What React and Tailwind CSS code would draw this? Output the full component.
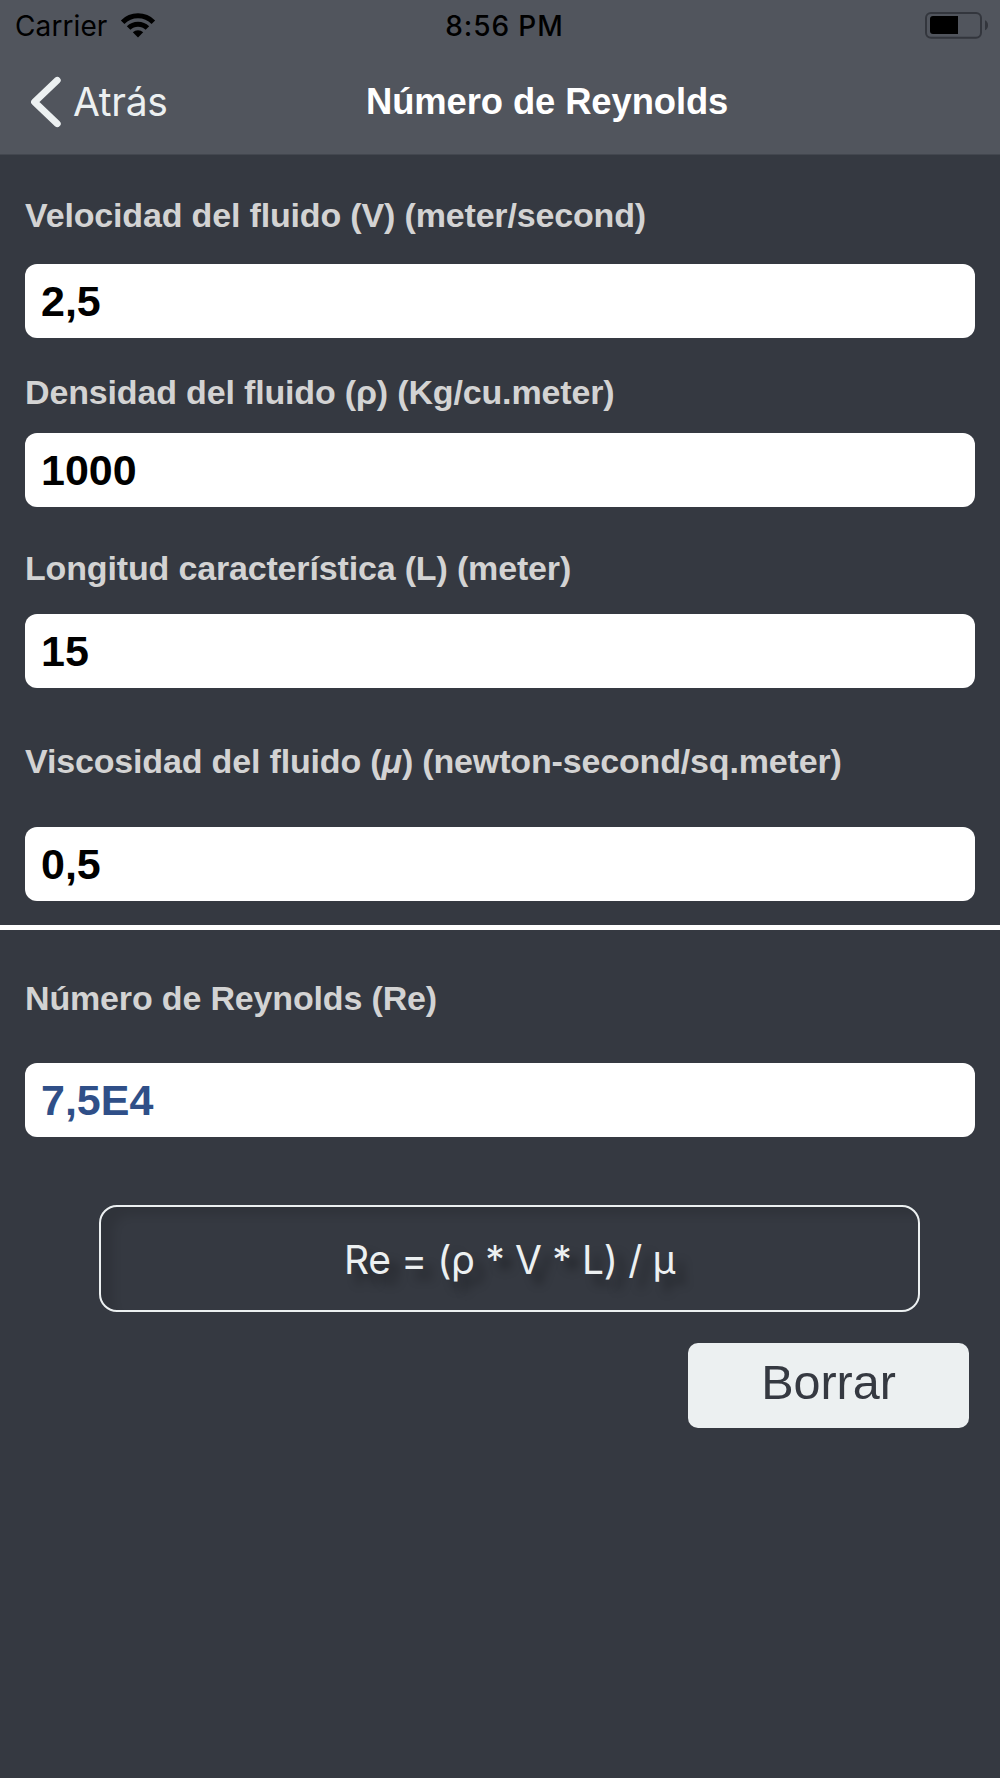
import React, { useState } from "react";

const inputFields = [
  {
    id: "velocity",
    label: "Velocidad del fluido (V) (meter/second)",
    value: "2,5",
    spacing: "pt-[40px] gap-[29px]",
  },
  {
    id: "density",
    label: "Densidad del fluido (ρ) (Kg/cu.meter)",
    value: "1000",
    spacing: "pt-[34px] gap-[21px]",
  },
  {
    id: "length",
    label: "Longitud característica (L) (meter)",
    value: "15",
    spacing: "pt-[41px] gap-[26px]",
  },
  {
    id: "viscosity",
    label: (
      <>
        Viscosidad del fluido (<i>μ</i>) (newton-second/sq.meter)
      </>
    ),
    value: "0,5",
    spacing: "pt-[53px] gap-[46px]",
  },
];

const WifiIcon = () => (
  <svg width="36" height="26" viewBox="0 0 36 26" fill="none">
    <path d="M2.66 9.16 A21.7 21.7 0 0 1 33.34 9.16" stroke="#000" strokeWidth="5" />
    <path d="M8.6 15.1 A13.3 13.3 0 0 1 27.4 15.1" stroke="#000" strokeWidth="5" />
    <path d="M18 24.5 L12.8 19.3 A7.4 7.4 0 0 1 23.2 19.3 Z" fill="#000" />
  </svg>
);

const BatteryIcon = () => (
  <svg width="64" height="28" viewBox="0 0 64 28" fill="none">
    <rect x="1" y="1" width="55" height="24.8" rx="5" stroke="#33363d" strokeWidth="2" />
    <path d="M8 4 H33 V22 H8 Q5 22 5 19 V7 Q5 4 8 4 Z" fill="#000" />
    <path d="M60 8.2 Q63 9.6 63 13.2 Q63 16.8 60 18.2 Z" fill="#33363d" />
  </svg>
);

const Field = ({ id, label, value, spacing, color = "text-black", onChange }) => (
  <div className={`flex flex-col px-[25px] ${spacing}`}>
    <label
      htmlFor={id}
      className="h-10 whitespace-nowrap text-[34px] leading-10 font-bold tracking-[-0.16px] text-[#d3d3d3]"
    >
      {label}
    </label>
    <input
      id={id}
      value={value}
      readOnly={!onChange}
      onChange={onChange}
      className={`h-[74px] w-full rounded-xl bg-white px-4 text-[43px] font-bold outline-none ${color}`}
    />
  </div>
);

const App = () => {
  const [values, setValues] = useState(
    Object.fromEntries(inputFields.map((field) => [field.id, field.value]))
  );
  const [result, setResult] = useState("7,5E4");

  const handleClear = () => {
    setValues({ velocity: "", density: "", length: "", viscosity: "" });
    setResult("");
  };

  return (
    <div className="h-[1778px] w-[1000px] overflow-hidden bg-[#353941] font-['Liberation_Sans',Arial,sans-serif]">
      {/* Status bar and navigation */}
      <header className="h-[155px] border-b border-[#43474f] bg-[#51555d]">
        <div className="grid h-[50px] grid-cols-3 items-center font-['Inter',sans-serif] text-[28px] leading-[50px] text-black">
          <div className="flex items-center gap-[13px] pl-[15px]">
            <span className="tracking-[0.1px]">Carrier</span>
            <WifiIcon />
          </div>
          <span className="pt-px pl-[9px] text-center font-medium tracking-[0.9px]">
            8:56 PM
          </span>
          <div className="flex justify-end pr-[11px]">
            <BatteryIcon />
          </div>
        </div>
        <div className="grid h-[104px] grid-cols-[360px_1fr] items-center">
          <button className="flex items-center gap-3 pl-[30px] font-['Inter',sans-serif] text-[39px] leading-[50px] font-normal tracking-[-0.3px] text-[#ecf0f1]">
            <svg width="31" height="52" viewBox="0 0 31 52" fill="none">
              <path
                d="M27.3 4.3 L4.5 26 L27.3 47.7"
                stroke="#ecf0f1"
                strokeWidth="6.8"
                strokeLinecap="round"
                strokeLinejoin="round"
              />
            </svg>
            Atrás
          </button>
          <h1 className="pl-[6px] text-[36.4px] leading-[50px] font-bold tracking-[-0.1px] text-white">
            Número de Reynolds
          </h1>
        </div>
      </header>

      <main>
        {inputFields.map((field) => (
          <Field
            key={field.id}
            id={field.id}
            label={field.label}
            spacing={field.spacing}
            value={values[field.id]}
            onChange={(e) =>
              setValues((prev) => ({ ...prev, [field.id]: e.target.value }))
            }
          />
        ))}

        <hr className="mt-6 h-[5px] border-0 bg-white" />

        <Field
          id="reynolds"
          label="Número de Reynolds (Re)"
          value={result}
          spacing="pt-12 gap-[45px]"
          color="text-[#2f4f88]"
        />

        {/* Formula */}
        <div className="mt-[68px] ml-[99px] flex h-[107px] w-[821px] items-center justify-center rounded-[18px] border-[2.5px] border-[#ecf0f1] pt-[3px] font-['Inter',sans-serif] text-[39px] font-normal tracking-[-0.35px] whitespace-nowrap text-[#ecf0f1] shadow-[inset_14px_10px_10px_-2px_rgba(0,0,0,0.1)] [text-shadow:10px_10px_10px_rgba(0,0,0,0.35)]">
          Re = (ρ * V * L) / μ
        </div>

        <div className="mt-[31px] flex justify-end pr-[31px]">
          <button
            onClick={handleClear}
            className="h-[85px] w-[281px] rounded-[10px] bg-[#ecf0f1] pb-[6px] text-[48.5px] text-[#353941]"
          >
            Borrar
          </button>
        </div>
      </main>
    </div>
  );
};

export default App;
